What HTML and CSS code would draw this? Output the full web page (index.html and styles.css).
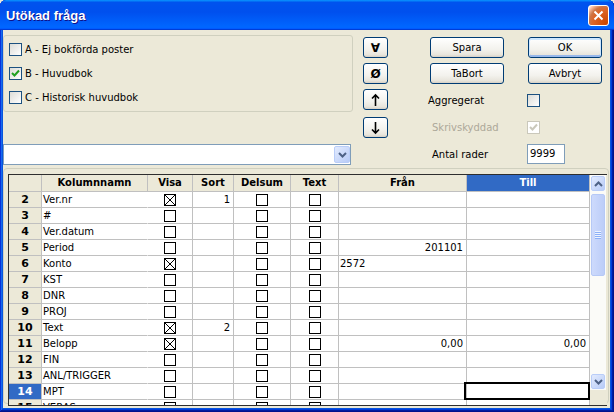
FILE: index.html
```html
<!DOCTYPE html>
<html lang="sv">
<head>
<meta charset="utf-8">
<title>Utökad fråga</title>
<link rel="stylesheet" href="styles.css">
</head>
<body>
<div class="window">
  <div class="titlebar">
    <span class="title">Utökad fråga</span>
    <span class="close"><svg width="11" height="11" viewBox="0 0 11 11"><path d="M1.5 1.5L9.5 9.5M9.5 1.5L1.5 9.5" stroke="#fff" stroke-width="2"/></svg></span>
  </div>
  <div class="client">
    <div class="top">
      <div class="leftcol">
        <div class="group">
          <div class="chk"><span class="xcb"></span><span>A - Ej bokförda poster</span></div>
          <div class="chk"><span class="xcb"><svg width="11" height="11" viewBox="0 0 11 11"><path d="M2 5L4.5 7.5L9 2.5" fill="none" stroke="#21a121" stroke-width="2"/></svg></span><span>B - Huvudbok</span></div>
          <div class="chk"><span class="xcb"></span><span>C - Historisk huvudbok</span></div>
        </div>
        <div class="combo"><span class="dd"><svg width="9" height="6" viewBox="0 0 9 6"><path d="M1 1L4.5 4.5L8 1" fill="none" stroke="#4d6185" stroke-width="2"/></svg></span></div>
      </div>
      <div class="tools">
        <div class="btn tool">∀</div>
        <div class="btn tool t2">Ø</div>
        <div class="btn tool t3"><svg width="9" height="14" viewBox="0 0 9 14"><path d="M4.5 13V2M1 5.5L4.5 2L8 5.5" fill="none" stroke="#000" stroke-width="1.6"/></svg></div>
        <div class="btn tool t4"><svg width="9" height="14" viewBox="0 0 9 14"><path d="M4.5 1V12M1 8.5L4.5 12L8 8.5" fill="none" stroke="#000" stroke-width="1.6"/></svg></div>
      </div>
      <div class="right">
        <div class="brow"><div class="btn">Spara</div><div class="btn def">OK</div></div>
        <div class="brow"><div class="btn">TaBort</div><div class="btn">Avbryt</div></div>
        <div class="opt o1"><span class="lbl">Aggregerat</span><span class="xcb"></span></div>
        <div class="opt o2 dis"><span class="lbl">Skrivskyddad</span><span class="xcb"><svg width="11" height="11" viewBox="0 0 11 11"><path d="M2 5L4.5 7.5L9 2.5" fill="none" stroke="#cac8bb" stroke-width="2"/></svg></span></div>
        <div class="opt o3"><span class="lbl">Antal rader</span><span class="field">9999</span></div>
      </div>
    </div>
    <div class="gridframe">
      <div class="grid">
        <div class="rows">
          <div class="r h"><div class="c rh"></div><div class="c nm">Kolumnnamn</div><div class="c">Visa</div><div class="c">Sort</div><div class="c">Delsum</div><div class="c">Text</div><div class="c">Från</div><div class="c sel">Till</div></div>
          <div class="r"><div class="c rh">2</div><div class="c nm">Ver.nr</div><div class="c cbc"><span class="gcb"><svg width="10" height="10" viewBox="0 0 10 10"><path d="M0 0L10 10M10 0L0 10" stroke="#000" stroke-width="1"/></svg></span></div><div class="c num">1</div><div class="c cbc"><span class="gcb"></span></div><div class="c cbc"><span class="gcb"></span></div><div class="c num"></div><div class="c num"></div></div>
          <div class="r"><div class="c rh">3</div><div class="c nm">#</div><div class="c cbc"><span class="gcb"></span></div><div class="c num"></div><div class="c cbc"><span class="gcb"></span></div><div class="c cbc"><span class="gcb"></span></div><div class="c num"></div><div class="c num"></div></div>
          <div class="r"><div class="c rh">4</div><div class="c nm">Ver.datum</div><div class="c cbc"><span class="gcb"></span></div><div class="c num"></div><div class="c cbc"><span class="gcb"></span></div><div class="c cbc"><span class="gcb"></span></div><div class="c num"></div><div class="c num"></div></div>
          <div class="r"><div class="c rh">5</div><div class="c nm">Period</div><div class="c cbc"><span class="gcb"></span></div><div class="c num"></div><div class="c cbc"><span class="gcb"></span></div><div class="c cbc"><span class="gcb"></span></div><div class="c num">201101</div><div class="c num"></div></div>
          <div class="r"><div class="c rh">6</div><div class="c nm">Konto</div><div class="c cbc"><span class="gcb"><svg width="10" height="10" viewBox="0 0 10 10"><path d="M0 0L10 10M10 0L0 10" stroke="#000" stroke-width="1"/></svg></span></div><div class="c num"></div><div class="c cbc"><span class="gcb"></span></div><div class="c cbc"><span class="gcb"></span></div><div class="c lft">2572</div><div class="c num"></div></div>
          <div class="r"><div class="c rh">7</div><div class="c nm">KST</div><div class="c cbc"><span class="gcb"></span></div><div class="c num"></div><div class="c cbc"><span class="gcb"></span></div><div class="c cbc"><span class="gcb"></span></div><div class="c num"></div><div class="c num"></div></div>
          <div class="r"><div class="c rh">8</div><div class="c nm">DNR</div><div class="c cbc"><span class="gcb"></span></div><div class="c num"></div><div class="c cbc"><span class="gcb"></span></div><div class="c cbc"><span class="gcb"></span></div><div class="c num"></div><div class="c num"></div></div>
          <div class="r"><div class="c rh">9</div><div class="c nm">PROJ</div><div class="c cbc"><span class="gcb"></span></div><div class="c num"></div><div class="c cbc"><span class="gcb"></span></div><div class="c cbc"><span class="gcb"></span></div><div class="c num"></div><div class="c num"></div></div>
          <div class="r"><div class="c rh">10</div><div class="c nm">Text</div><div class="c cbc"><span class="gcb"><svg width="10" height="10" viewBox="0 0 10 10"><path d="M0 0L10 10M10 0L0 10" stroke="#000" stroke-width="1"/></svg></span></div><div class="c num">2</div><div class="c cbc"><span class="gcb"></span></div><div class="c cbc"><span class="gcb"></span></div><div class="c num"></div><div class="c num"></div></div>
          <div class="r"><div class="c rh">11</div><div class="c nm">Belopp</div><div class="c cbc"><span class="gcb"><svg width="10" height="10" viewBox="0 0 10 10"><path d="M0 0L10 10M10 0L0 10" stroke="#000" stroke-width="1"/></svg></span></div><div class="c num"></div><div class="c cbc"><span class="gcb"></span></div><div class="c cbc"><span class="gcb"></span></div><div class="c num">0,00</div><div class="c num">0,00</div></div>
          <div class="r"><div class="c rh">12</div><div class="c nm">FIN</div><div class="c cbc"><span class="gcb"></span></div><div class="c num"></div><div class="c cbc"><span class="gcb"></span></div><div class="c cbc"><span class="gcb"></span></div><div class="c num"></div><div class="c num"></div></div>
          <div class="r"><div class="c rh">13</div><div class="c nm">ANL/TRIGGER</div><div class="c cbc"><span class="gcb"></span></div><div class="c num"></div><div class="c cbc"><span class="gcb"></span></div><div class="c cbc"><span class="gcb"></span></div><div class="c num"></div><div class="c num"></div></div>
          <div class="r"><div class="c rh sel">14</div><div class="c nm">MPT</div><div class="c cbc"><span class="gcb"></span></div><div class="c num"></div><div class="c cbc"><span class="gcb"></span></div><div class="c cbc"><span class="gcb"></span></div><div class="c num"></div><div class="c num cur"></div></div>
          <div class="r"><div class="c rh">15</div><div class="c nm">VERAS</div><div class="c cbc"><span class="gcb"></span></div><div class="c num"></div><div class="c cbc"><span class="gcb"></span></div><div class="c cbc"><span class="gcb"></span></div><div class="c num"></div><div class="c num"></div></div>
        </div>
        <div class="vcol">
          <div class="vscroll">
            <div class="sb"><svg width="9" height="6" viewBox="0 0 9 6"><path d="M1 5L4.5 1.5L8 5" fill="none" stroke="#4d6185" stroke-width="2"/></svg></div>
            <div class="thumb"><span class="grip"></span></div>
            <div class="sb down"><svg width="9" height="6" viewBox="0 0 9 6"><path d="M1 1L4.5 4.5L8 1" fill="none" stroke="#4d6185" stroke-width="2"/></svg></div>
          </div>
        </div>
      </div>
    </div>
  </div>
</div>
</body>
</html>
```
FILE: styles.css
```css
* { box-sizing: border-box; }
html, body { margin: 0; padding: 0; }
body {
  width: 614px; height: 412px; overflow: hidden;
  background: #ece9d8;
  font-family: "DejaVu Sans", "Liberation Sans", sans-serif;
  font-size: 10px; color: #000;
}
.window {
  width: 614px; height: 412px;
  display: flex; flex-direction: column;
  background: #0855dd;
  border-radius: 6px 6px 0 0;
  overflow: hidden;
  box-shadow: inset -1px -1px #00138c, inset 1px 1px #0831d9, inset -2px -2px #001ea0, inset 2px 2px #166aee, inset -3px -3px #003bda, inset 3px 3px #0855dd;
}
.titlebar {
  flex: none; height: 30px;
  display: flex; align-items: center;
  padding: 0 5px 0 6px;
  background: linear-gradient(180deg, #0997ff, #0053ee 8%, #0050ee 40%, #06f 88%, #06f 93%, #005bff 95%, #003dd7 96%, #003dd7);
  border-radius: 6px 6px 0 0;
}
.title {
  flex: 1;
  color: #fff;
  font: bold 13px "Liberation Sans", Arial, sans-serif;
  text-shadow: 1px 1px #0f1089;
}
.close {
  width: 21px; height: 21px;
  border: 1px solid #fff; border-radius: 3px;
  background: radial-gradient(circle at 90% 90%, #cc4600 0, #dc6527 55%, #cd7546 70%, #ffccb2 90%, #fff 100%);
  display: flex; align-items: center; justify-content: center;
}
.client {
  flex: 1; min-height: 0;
  margin: 0 4px 4px 3px;
  background: #ece9d8;
  display: flex; flex-direction: column;
}
.top { flex: none; height: 138px; display: flex; }
.leftcol { width: 350px; flex: none; padding-top: 5px; }
.group {
  height: 77px;
  border: 1px solid #d0d0bf; border-radius: 3px;
  padding: 7px 0 0 5px;
}
.chk { display: flex; align-items: center; height: 13px; margin-bottom: 11px; white-space: nowrap; }
.xcb {
  width: 13px; height: 13px; flex: none;
  border: 1px solid #1c5180;
  background: linear-gradient(135deg, #dcdcd7, #fff);
  display: flex;
}
.chk .xcb { margin-right: 3px; }
.combo {
  margin-top: 32px;
  width: 348px; height: 21px;
  border: 1px solid #7f9db9; background: #fff;
  display: flex; justify-content: flex-end;
  padding: 1px 0;
}
.dd, .sb {
  width: 16px; height: 17px;
  border: 1px solid #b9cdf8; border-radius: 2px;
  background: linear-gradient(135deg, #e3ebfe, #b7cbf7);
  display: flex; align-items: center; justify-content: center;
}
.tools { width: 25px; flex: none; margin-left: 10px; padding-top: 7px; display: flex; flex-direction: column; }
.btn {
  height: 21px; flex: none;
  border: 1px solid #003c74; border-radius: 3px;
  background: linear-gradient(180deg, #fff, #f3f2ed 60%, #e8e5dc 88%, #d6d0c5);
  display: flex; align-items: center; justify-content: center;
  white-space: nowrap;
}
.tool { font-weight: bold; font-size: 12px; }
.t2, .t3 { margin-top: 5px; }
.t4 { margin-top: 7px; }
.right { flex: 1; margin-left: 40px; }
.brow { display: flex; gap: 24px; padding-left: 2px; margin-top: 7px; }
.brow + .brow { margin-top: 5px; }
.brow .btn { width: 74px; }
.def { box-shadow: inset 0 1px 0 1px #cee7ff, inset 0 -1px 0 1px #98b8ea; }
.opt { display: flex; align-items: center; white-space: nowrap; }
.lbl { width: 99px; flex: none; }
.o1 { margin-top: 10px; height: 13px; }
.o2 { margin-top: 14px; height: 13px; }
.o3 { margin-top: 10px; height: 20px; }
.o2 .lbl, .o3 .lbl { padding-left: 4px; }
.dis .lbl { color: #aca899; }
.dis .xcb { border-color: #cac8bb; background: #fff; }
.field {
  width: 38px; height: 20px;
  border: 1px solid #7f9db9; background: #fff;
  padding-left: 2px; line-height: 18px;
}
.gridframe {
  flex: none;
  width: 606px; height: 236px;
  border: 1px solid #d0d0bf; border-radius: 4px;
  padding: 5px 0 0 4px;
}
.grid {
  width: 599px; height: 232px;
  border: 1px solid #2e2e2e; border-right: none;
  display: flex;
  background: #fff;
}
.rows { width: 581px; flex: none; overflow: hidden; }
.r {
  display: grid;
  grid-template-columns: 33px 106px 45px 41px 57px 48px 128px 123px;
  height: 16px;
}
.r.h { height: 17px; }
.c {
  border-right: 1px solid #c0c0c0;
  border-bottom: 1px solid #c0c0c0;
  line-height: 15px;
  white-space: nowrap;
  position: relative;
}
.h .c {
  background: #ece9d8;
  font-weight: bold;
  text-align: center;
  line-height: 16px;
}
.rh { background: #ece9d8; font-weight: bold; font-size: 11px; text-align: center; }
.nm { padding-left: 1px; border-right-color: #fff; }
.h .nm { border-right-color: #c0c0c0; padding-left: 0; }
.cbc { display: flex; align-items: center; justify-content: center; }
.gcb {
  width: 12px; height: 12px;
  border: 1px solid #000; background: #fff;
  display: flex;
}
.num { text-align: right; padding-right: 3px; }
.lft { padding-left: 1px; }
.h .sel, .rh.sel { background: #316ac5; color: #fff; }
.cur::after {
  content: "";
  position: absolute;
  left: -3px; top: -2px; right: -1px; bottom: -1px;
  border: 2px solid #000;
}
.vcol { width: 17px; flex: none; background: #ece9d8; }
.vscroll {
  width: 16px; height: 215px;
  background: #fbfbf8;
  display: flex; flex-direction: column; align-items: center;
  padding: 1px 0;
}
.sb { width: 14px; height: 15px; }
.sb.down { margin-top: auto; }
.thumb {
  margin-top: 3px;
  width: 14px; height: 82px;
  border: 1px solid #b6c9f6; border-radius: 2px;
  background: linear-gradient(90deg, #cddafc, #bccdf8);
  display: flex; align-items: center; justify-content: center;
}
.grip {
  width: 6px; height: 8px;
  background: repeating-linear-gradient(180deg, #eef4fe 0 1px, #8cb0f8 1px 2px);
}
```
